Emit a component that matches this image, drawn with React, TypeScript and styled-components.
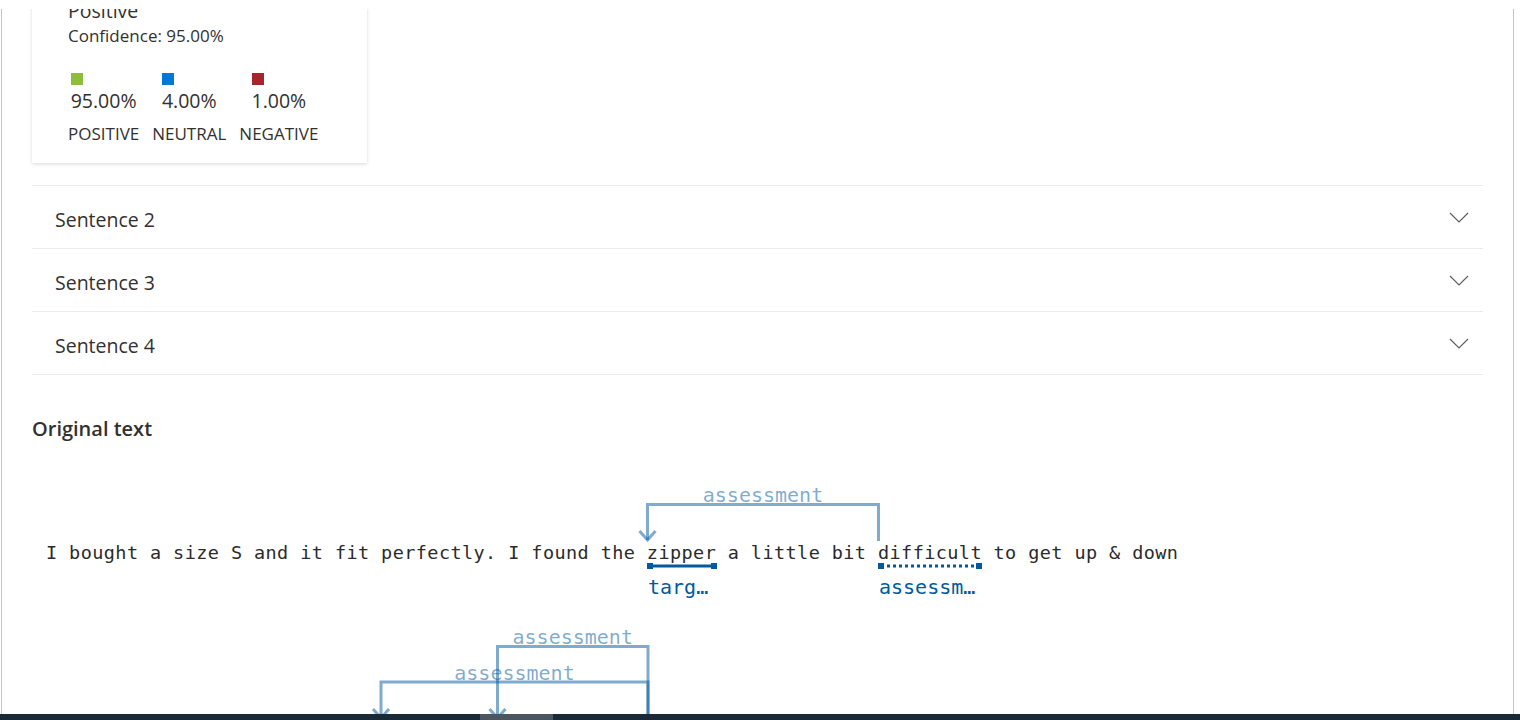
import styled, { createGlobalStyle } from "styled-components";

const GlobalStyle = createGlobalStyle`
  html, body {
    margin: 0;
    padding: 0;
    background: #fff;
  }
  body {
    font-family: "Segoe UI", "Open Sans", sans-serif;
    color: #323130;
  }
`;

const legend = [
  { color: "#8cbd3c", value: "95.00%", label: "Positive" },
  { color: "#0078d4", value: "4.00%", label: "Neutral" },
  { color: "#a4262c", value: "1.00%", label: "Negative" },
];

const sentences = ["Sentence 2", "Sentence 3", "Sentence 4"];

const ARC = "#005a9e";

function Chevron() {
  return (
    <svg width="20" height="11" viewBox="0 0 20 11">
      <polyline points="1,1 10,10 19,1" fill="none" stroke="#605e5c" strokeWidth="1.2" />
    </svg>
  );
}

// one arc of the dependency view, arrow at the "from" end
function Arc({ from, to, top, bottom, label }: { from: number; to: number; top: number; bottom: number; label: string }) {
  return (
    <g>
      <path
        d={`M${from},${bottom} L${from},${top} L${to},${top} L${to},${bottom + 1}`}
        fill="none"
        stroke={ARC}
        strokeOpacity={0.5}
        strokeWidth={3}
      />
      <path
        d={`M${from - 8},${bottom - 9} L${from},${bottom} L${from + 8},${bottom - 9}`}
        fill="none"
        stroke={ARC}
        strokeOpacity={0.5}
        strokeWidth={3}
      />
      <ArcLabel x={(from + to) / 2} y={top - 2.5} textAnchor="middle">
        {label}
      </ArcLabel>
    </g>
  );
}

function Span({ x1, x2, y, dotted, label }: { x1: number; x2: number; y: number; dotted?: boolean; label: string }) {
  return (
    <g>
      <line
        x1={x1 + 3}
        x2={x2 - 3}
        y1={y}
        y2={y}
        stroke={ARC}
        strokeWidth={3}
        strokeDasharray={dotted ? "3 3" : undefined}
      />
      <rect x={x1} y={y - 3} width={6} height={6} fill={ARC} />
      <rect x={x2 - 6} y={y - 3} width={6} height={6} fill={ARC} />
      <SpanLabel x={x1 + 1} y={y + 28}>
        {label}
      </SpanLabel>
    </g>
  );
}

export default function App() {
  return (
    <Shell>
      <GlobalStyle />
      <Viewport>
        <Frame>
          <Card>
            <CardTitle>Positive</CardTitle>
            <Confidence>Confidence: 95.00%</Confidence>
            <Legend>
              {legend.map((item) => (
                <LegendCol key={item.label}>
                  <ValueBlock>
                    <Swatch $color={item.color} />
                    <Value>{item.value}</Value>
                  </ValueBlock>
                  <LegendLabel>{item.label}</LegendLabel>
                </LegendCol>
              ))}
            </Legend>
          </Card>

          <Accordion>
            {sentences.map((s) => (
              <Row key={s}>
                <RowTitle>{s}</RowTitle>
                <Chevron />
              </Row>
            ))}
          </Accordion>

          <Heading>Original text</Heading>

          <Chart width="1451" height="290" viewBox="0 0 1451 290">
            <Arc from={615.5} to={846.5} top={44.5} bottom={80} label="assessment" />
            <SentenceText x={14} y={99} textLength={1132} lengthAdjust="spacing">
              I bought a size S and it fit perfectly. I found the zipper a little bit difficult to get up &amp; down
            </SentenceText>
            <Span x1={615} x2={685} y={106} label="targ…" />
            <Span x1={846} x2={950} y={106} dotted label="assessm…" />

            <Arc from={465.5} to={616} top={186.5} bottom={258} label="assessment" />
            <Arc from={349} to={616} top={222} bottom={258} label="assessment" />
          </Chart>
        </Frame>
      </Viewport>
      <ScrollTrack>
        <Thumb $offset={480} $size={73} />
      </ScrollTrack>
    </Shell>
  );
}

const Shell = styled.div`
  width: 1520px;
  height: 720px;
  overflow: hidden;
  display: flex;
  flex-direction: column;
`;

const Viewport = styled.div`
  flex: 1;
  min-height: 0;
  overflow: hidden;
  display: flex;
  flex-direction: column;
`;

const Frame = styled.div`
  flex: 1;
  min-height: 0;
  overflow: hidden;
  width: 1513px;
  box-sizing: border-box;
  margin: 9px 0 0 1px;
  padding: 0 30px;
  border-left: 1px solid #c8c6c4;
  border-right: 1px solid #c8c6c4;
  display: flex;
  flex-direction: column;
`;

const Card = styled.section`
  align-self: flex-start;
  flex-shrink: 0;
  width: 335px;
  box-sizing: border-box;
  margin-top: -30px;
  padding: 20px 36px 19px;
  background: #fff;
  box-shadow: 0 1.6px 3.6px rgba(0, 0, 0, 0.132), 0 0.3px 0.9px rgba(0, 0, 0, 0.108);
`;

const CardTitle = styled.div`
  font-size: 19.5px;
  line-height: 24px;
`;

const Confidence = styled.div`
  margin-top: 3px;
  font-size: 17px;
  line-height: 20px;
`;

const Legend = styled.div`
  display: flex;
  gap: 13px;
  margin-top: 27px;
`;

const LegendCol = styled.div`
  display: flex;
  flex-direction: column;
  align-items: center;
`;

const ValueBlock = styled.div`
  display: flex;
  flex-direction: column;
  align-items: flex-start;
`;

const Swatch = styled.span<{ $color: string }>`
  width: 12px;
  height: 12px;
  background: ${(p) => p.$color};
`;

const Value = styled.div`
  margin-top: 4px;
  font-size: 19.5px;
  line-height: 24px;
`;

const LegendLabel = styled.div`
  margin-top: 11px;
  font-size: 17px;
  line-height: 20px;
  text-transform: uppercase;
`;

const Accordion = styled.div`
  flex-shrink: 0;
  margin-top: 22px;
  border-bottom: 1px solid #edebe9;
`;

const Row = styled.div`
  height: 63px;
  box-sizing: border-box;
  border-top: 1px solid #edebe9;
  display: flex;
  align-items: center;
  justify-content: space-between;
  padding: 0 14px 0 23px;
`;

const RowTitle = styled.div`
  padding-top: 5px;
  font-size: 19.5px;
  line-height: 28px;
`;

const Heading = styled.h3`
  flex-shrink: 0;
  margin: 40px 0 0;
  font-size: 20px;
  font-weight: 600;
  line-height: 28px;
`;

const Chart = styled.svg`
  display: block;
  flex-shrink: 0;
  margin-top: 17px;
  font-family: "DejaVu Sans Mono", "Liberation Mono", monospace;
`;

const SentenceText = styled.text`
  font-size: 18.5px;
  fill: #2b2b2b;
  white-space: pre;
`;

const ArcLabel = styled.text`
  font-size: 20px;
  fill: ${ARC};
  fill-opacity: 0.5;
`;

const SpanLabel = styled.text`
  font-size: 20px;
  fill: ${ARC};
`;

const ScrollTrack = styled.div`
  flex-shrink: 0;
  height: 6px;
  background: #1b2a37;
  display: flex;
`;

const Thumb = styled.div<{ $offset: number; $size: number }>`
  margin-left: ${(p) => p.$offset}px;
  width: ${(p) => p.$size}px;
  background: #4b5661;
`;
